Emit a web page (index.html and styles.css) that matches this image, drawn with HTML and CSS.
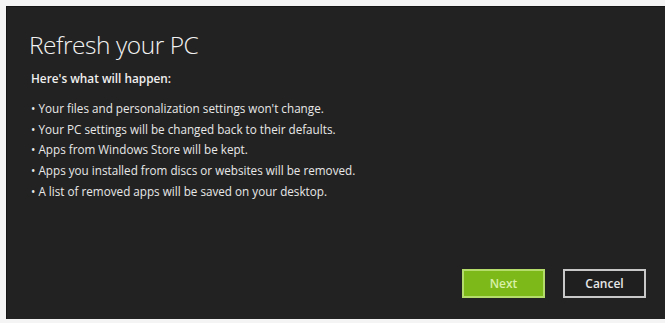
FILE: index.html
```html
<!DOCTYPE html>
<html>
<head>
<meta charset="utf-8">
<link rel="stylesheet" href="styles.css">
</head>
<body>
<div class="panel">
  <h1 class="title">Refresh your PC</h1>
  <p class="lead">Here's what will happen:</p>
  <ul class="list">
    <li>Your files and personalization settings won't change.</li>
    <li>Your PC settings will be changed back to their defaults.</li>
    <li>Apps from Windows Store will be kept.</li>
    <li>Apps you installed from discs or websites will be removed.</li>
    <li>A list of removed apps will be saved on your desktop.</li>
  </ul>
  <div class="actions">
    <button class="btn btn-next">Next</button>
    <button class="btn btn-cancel">Cancel</button>
  </div>
</div>
</body>
</html>
```
FILE: styles.css
```css
html, body {
  margin: 0;
  padding: 0;
  background: #f4f4f4;
}
body {
  padding: 6px 0 4px 6px;
  font-family: "Open Sans", "Liberation Sans", sans-serif;
}
.panel {
  background: #222222;
  height: 313px;
  box-sizing: border-box;
  padding: 23px 19px 21px 22px;
  display: flex;
  flex-direction: column;
  border-left: 1px solid #151515;
  border-top: 1px solid #151515;
}
.title {
  margin: 0;
  font-weight: 300;
  font-size: 24.5px;
  line-height: 30px;
  color: #f2f2f2;
  letter-spacing: -0.45px;
}
.lead {
  margin: 10px 0 0 2px;
  font-size: 11.8px;
  font-weight: 600;
  line-height: 16px;
  color: #efefef;
}
.list {
  list-style: none;
  margin: 12px 0 0 2px;
  padding: 0;
}
.list li {
  font-size: 11.7px;
  line-height: 20.7px;
  color: #e8e8e8;
}
.list li::before {
  content: "• ";
}
.actions {
  margin-top: auto;
  display: flex;
  justify-content: flex-end;
  gap: 18px;
}
.btn {
  width: 83px;
  height: 29px;
  box-sizing: border-box;
  font-family: "Open Sans", "Liberation Sans", sans-serif;
  font-size: 12px;
  font-weight: 600;
  padding: 0;
}
.btn-next {
  background: #7dba19;
  border: 2px solid #b4dc6a;
  color: #d8f0a8;
}
.btn-cancel {
  background: #1f1f1f;
  border: 2px solid #c8c8c8;
  color: #e8e8e8;
}
```
